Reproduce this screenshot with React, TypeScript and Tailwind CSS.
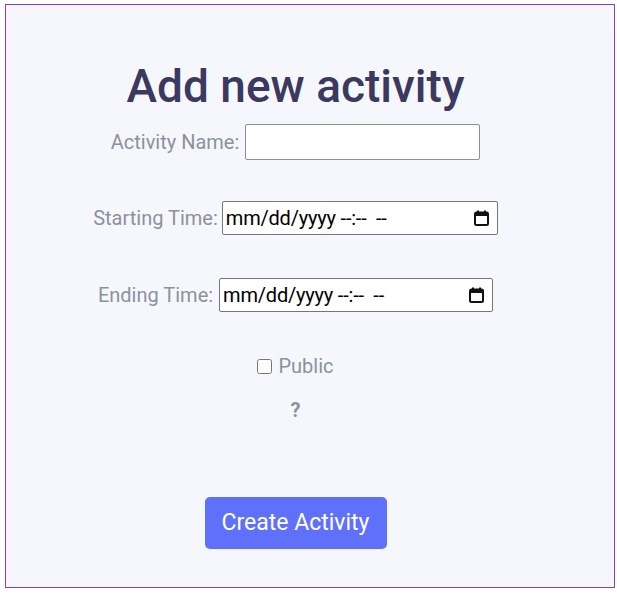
import React from "react";

function CalendarIcon() {
  return (
    <svg width="15" height="16" viewBox="0 0 15 16" className="shrink-0">
      <rect x="3" y="0.5" width="2" height="3" fill="#111" />
      <rect x="10" y="0.5" width="2" height="3" fill="#111" />
      <rect x="1" y="2.5" width="13" height="12.5" rx="1.5" fill="none" stroke="#111" strokeWidth="2" />
      <rect x="1" y="2.5" width="13" height="3.5" fill="#111" />
    </svg>
  );
}

function DateTimeField({ width }: { width: string }) {
  return (
    <div
      className={`${width} h-[34px] bg-white border border-[#767676] rounded-[2px] pl-[3px] pr-[8px] flex items-center justify-between text-[20px] text-black`}
    >
      <span className="tracking-[-0.2px]">mm/dd/yyyy --:--&nbsp; --</span>
      <CalendarIcon />
    </div>
  );
}

export default function App() {
  return (
    <div className="bg-white w-[617px] h-[596px] pt-[4px] pl-[5px] font-['Roboto',sans-serif]">
      <div className="w-[610px] h-[584px] border border-[#7b3fe0] bg-[#f6f7fd] pr-[29px] flex flex-col items-center">
        <h1 className="mt-[54px] text-[46px] leading-[54px] font-medium text-[#3b3960]">
          Add new activity
        </h1>

        <div className="mt-[11px] flex items-center gap-[6px]">
          <label className="text-[20px] text-[#8c919e]">Activity Name:</label>
          <input
            type="text"
            className="w-[235px] h-[36px] bg-white border border-[#8f8f8f] rounded-[2px] px-[2px] text-[20px] text-black"
          />
        </div>

        <div className="mt-[41px] flex items-center gap-[4px]">
          <label className="text-[20px] text-[#8c919e]">Starting Time:</label>
          <DateTimeField width="w-[276px]" />
        </div>

        <div className="mt-[43px] flex items-center gap-[6px]">
          <label className="text-[20px] text-[#8c919e]">Ending Time:</label>
          <DateTimeField width="w-[274px]" />
        </div>

        <label className="mt-[39px] flex items-center gap-[6px] text-[20px] text-[#8c919e]">
          <input type="checkbox" className="w-[15px] h-[15px] m-0" />
          Public
        </label>

        <p className="mt-[14px] text-[20px] font-bold text-[#8c919e]">?</p>

        <button className="mt-[72px] w-[182px] h-[52px] rounded-[5px] bg-[#5f70fa] text-white text-[23px]">
          Create Activity
        </button>
      </div>
    </div>
  );
}
